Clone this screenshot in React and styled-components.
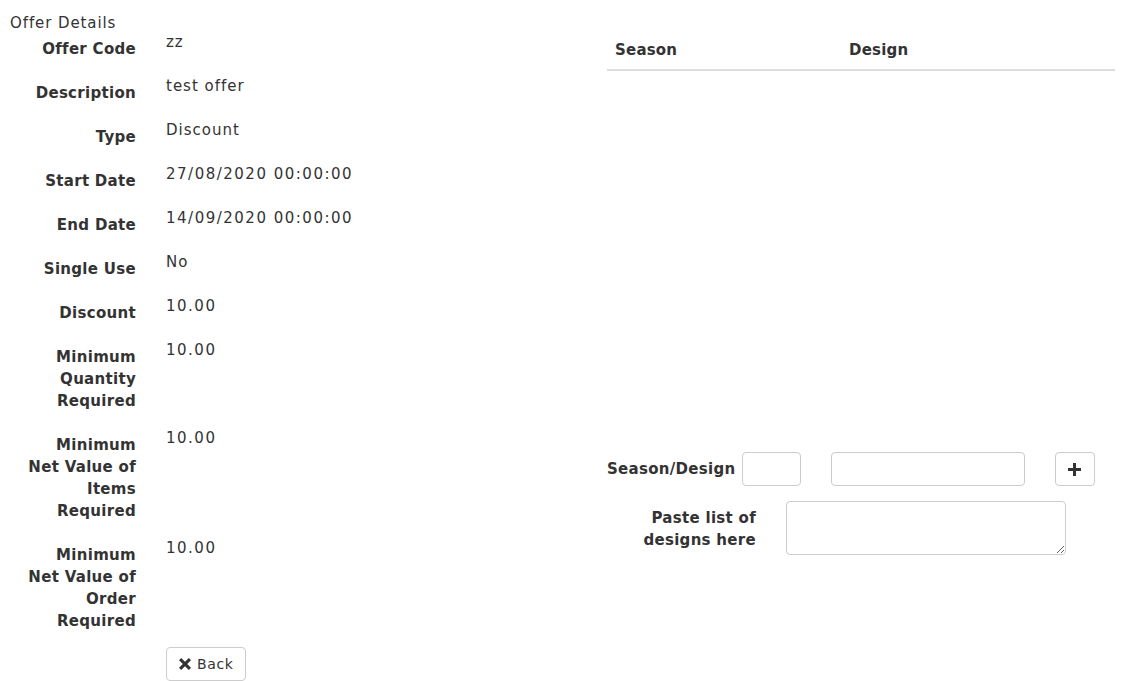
import React from 'react';
import styled, { createGlobalStyle } from 'styled-components';

const Global = createGlobalStyle`
  body {
    margin: 0;
    background: #fff;
    font-family: "DejaVu Sans", "Liberation Sans", sans-serif;
    font-size: 15px;
    color: #333;
  }
`;

const Page = styled.div`
  display: flex;
  width: 1140px;
`;

const LeftCol = styled.div`
  width: 607px;
  flex: none;
`;

const Heading = styled.div`
  padding: 12px 0 0 10px;
  line-height: 22px;
  height: 19px;
  font-size: 15px;
  letter-spacing: 0.9px;
`;

const Row = styled.div`
  display: flex;
  margin-bottom: 15px;
`;

const Label = styled.div`
  width: 136px;
  flex: none;
  text-align: right;
  font-weight: 700;
  padding-top: 7px;
  line-height: 22px;
  letter-spacing: 0.3px;
  color: #333;
`;

const Value = styled.div`
  margin-left: 30px;
  padding-top: 0;
  line-height: 22px;
  letter-spacing: ${p => p.wide ? 1.5 : 1}px;
`;

const BackButton = styled.button`
  margin-left: 166px;
  margin-top: 0;
  display: inline-flex;
  align-items: center;
  gap: 6px;
  height: 34px;
  padding: 0 12px;
  border: 1px solid #ccc;
  border-radius: 4px;
  background: #fff;
  font-family: inherit;
  font-size: 14px;
  letter-spacing: 0.6px;
  color: #333;
`;

const RightCol = styled.div`
  width: 508px;
  padding-top: 31px;
`;

const Table = styled.table`
  width: 100%;
  border-collapse: collapse;
`;

const Th = styled.th`
  text-align: left;
  padding: 8px;
  line-height: 22px;
  border-bottom: 2px solid #ddd;
  font-weight: 700;
  letter-spacing: 0.2px;
  width: ${p => p.w || 'auto'};
`;

const FormRow = styled.div`
  display: flex;
  align-items: ${p => p.top ? 'flex-start' : 'center'};
  margin-top: ${p => p.mt}px;
`;

const InlineLabel = styled.div`
  font-weight: 700;
  line-height: 22px;
  text-align: right;
  letter-spacing: 0.3px;
  width: ${p => p.w ? p.w + 'px' : 'auto'};
  padding-top: ${p => p.pt || 0}px;
`;

const Input = styled.input`
  box-sizing: border-box;
  width: ${p => p.w}px;
  height: 34px;
  margin-left: ${p => p.ml}px;
  border: 1px solid #ccc;
  border-radius: 4px;
  padding: 6px 12px;
  font-family: inherit;
  font-size: 14px;
`;

const TextArea = styled.textarea`
  box-sizing: border-box;
  width: 280px;
  height: 54px;
  margin-left: 30px;
  border: 1px solid #ccc;
  border-radius: 4px;
  font-family: inherit;
`;

const IconButton = styled.button`
  box-sizing: border-box;
  width: 40px;
  height: 34px;
  margin-left: 30px;
  border: 1px solid #ccc;
  border-radius: 4px;
  background: #fff;
  display: flex;
  align-items: center;
  justify-content: center;
  padding: 0;
`;

const PlusIcon = () => (
  <svg width="13" height="13" viewBox="0 0 13 13">
    <path d="M5 0h3v5h5v3H8v5H5V8H0V5h5z" fill="#333" />
  </svg>
);

const RemoveIcon = () => (
  <svg width="12" height="12" viewBox="0 0 12 12">
    <path d="M2.2 0L6 3.8 9.8 0 12 2.2 8.2 6 12 9.8 9.8 12 6 8.2 2.2 12 0 9.8 3.8 6 0 2.2z" fill="#333" />
  </svg>
);

const details = [
  ['Offer Code', 'zz'],
  ['Description', 'test offer'],
  ['Type', 'Discount'],
  ['Start Date', '27/08/2020 00:00:00'],
  ['End Date', '14/09/2020 00:00:00'],
  ['Single Use', 'No'],
  ['Discount', '10.00'],
  [['Minimum', 'Quantity', 'Required'], '10.00'],
  [['Minimum', 'Net Value of', 'Items', 'Required'], '10.00'],
  [['Minimum', 'Net Value of', 'Order', 'Required'], '10.00'],
];

export default function App() {
  return (
    <>
      <Global />
      <Page>
        <LeftCol>
          <Heading>Offer Details</Heading>
          {details.map(([label, value], i) => (
            <Row key={i}>
              <Label>
                {Array.isArray(label)
                  ? label.map((l, j) => <div key={j}>{l}</div>)
                  : label}
              </Label>
              <Value wide={/^[\d./: ]+$/.test(value)}>{value}</Value>
            </Row>
          ))}
          <BackButton>
            <RemoveIcon />
            Back
          </BackButton>
        </LeftCol>
        <RightCol>
          <Table>
            <thead>
              <tr>
                <Th w="218px">Season</Th>
                <Th>Design</Th>
              </tr>
            </thead>
          </Table>
          <FormRow mt={381}>
            <InlineLabel>Season/Design</InlineLabel>
            <Input w={59} ml={6} />
            <Input w={194} ml={30} />
            <IconButton>
              <PlusIcon />
            </IconButton>
          </FormRow>
          <FormRow top mt={15}>
            <InlineLabel w={149} pt={6}>
              Paste list of
              <br />
              designs here
            </InlineLabel>
            <TextArea />
          </FormRow>
        </RightCol>
      </Page>
    </>
  );
}
